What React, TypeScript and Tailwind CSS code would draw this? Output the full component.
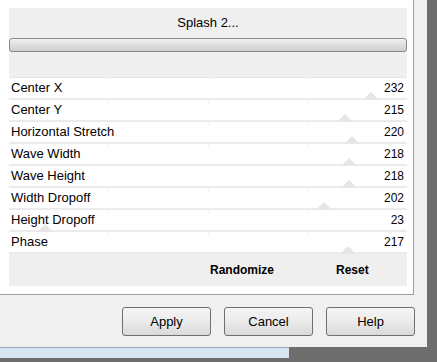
const rows = [
  { label: "Center X", value: 232 },
  { label: "Center Y", value: 215 },
  { label: "Horizontal Stretch", value: 220 },
  { label: "Wave Width", value: 218 },
  { label: "Wave Height", value: 218 },
  { label: "Width Dropoff", value: 202 },
  { label: "Height Dropoff", value: 23 },
  { label: "Phase", value: 217 },
];

function SliderRow({ label, value }: { label: string; value: number }) {
  const x = (value / 255) * 398;
  return (
    <div className="relative h-[22px] bg-white border-b-2 border-[#ebebeb] flex items-center justify-between pl-[2px] pr-[3px]">
      {/* quarter ticks */}
      <div className="absolute top-0 left-[99px] w-px h-[4px] bg-[#f3f3f3]" />
      <div className="absolute top-0 left-[199px] w-px h-[4px] bg-[#f3f3f3]" />
      <div className="absolute top-0 left-[298px] w-px h-[4px] bg-[#f3f3f3]" />
      {/* thumb */}
      <svg
        className="absolute bottom-[-2px]"
        style={{ left: x - 8 }}
        width="16"
        height="8"
        viewBox="0 0 16 8"
      >
        <polygon points="0,8 8,0 16,8" fill="#e6e6e6" />
      </svg>
      <span className="relative text-[13px]">{label}</span>
      <span className="relative">{value}</span>
    </div>
  );
}

function DlgButton({ children }: { children: string }) {
  return (
    <button className="w-[89px] h-[29px] rounded-[3px] border border-[#707070] bg-gradient-to-b from-[#f4f4f4] via-[#ebebeb] to-[#d9d9d9] text-[13px] text-black">
      {children}
    </button>
  );
}

export default function App() {
  return (
    <div
      className="w-[437px] h-[362px] bg-[#6e6e6e] overflow-hidden flex flex-col"
      style={{ fontFamily: '"Liberation Sans", Arial, sans-serif' }}
    >
      {/* Dialog */}
      <div className="w-[427px] h-[347px] bg-[#f0f0f0] flex flex-col shrink-0">
        {/* White settings pane */}
        <div className="w-[414px] h-[295px] bg-white border-r border-b border-[#a0a0a0] pl-[9px] pr-[6px] pt-[8px] pb-[8px]">
          <div className="w-[398px] h-[278px] bg-[#efefef] flex flex-col text-[12px] text-black">
            <div className="h-[30px] flex items-center justify-center text-[13px]">Splash 2...</div>
            <div className="h-[14px] rounded-[3px] border border-[#8a8a8a] bg-gradient-to-b from-[#f2f2f2] via-[#dedede] to-[#cfcfcf]" />
            <div className="h-[25px]" />
            <div className="border-t border-[#e6e6e6]">
              {rows.map((r) => (
                <SliderRow key={r.label} label={r.label} value={r.value} />
              ))}
            </div>
            <div className="flex-1 flex items-center font-bold">
              <span className="ml-[201px]">Randomize</span>
              <span className="ml-[62px]">Reset</span>
            </div>
          </div>
        </div>
        {/* Buttons */}
        <div className="flex-1 flex items-start justify-end gap-[13px] pt-[12px] pr-[12px]">
          <DlgButton>Apply</DlgButton>
          <DlgButton>Cancel</DlgButton>
          <DlgButton>Help</DlgButton>
        </div>
      </div>
      {/* window behind */}
      <div className="w-[289px] h-[11px] bg-[#d8e6f4] border-t border-[#9aa7b4] shrink-0" />
    </div>
  );
}
